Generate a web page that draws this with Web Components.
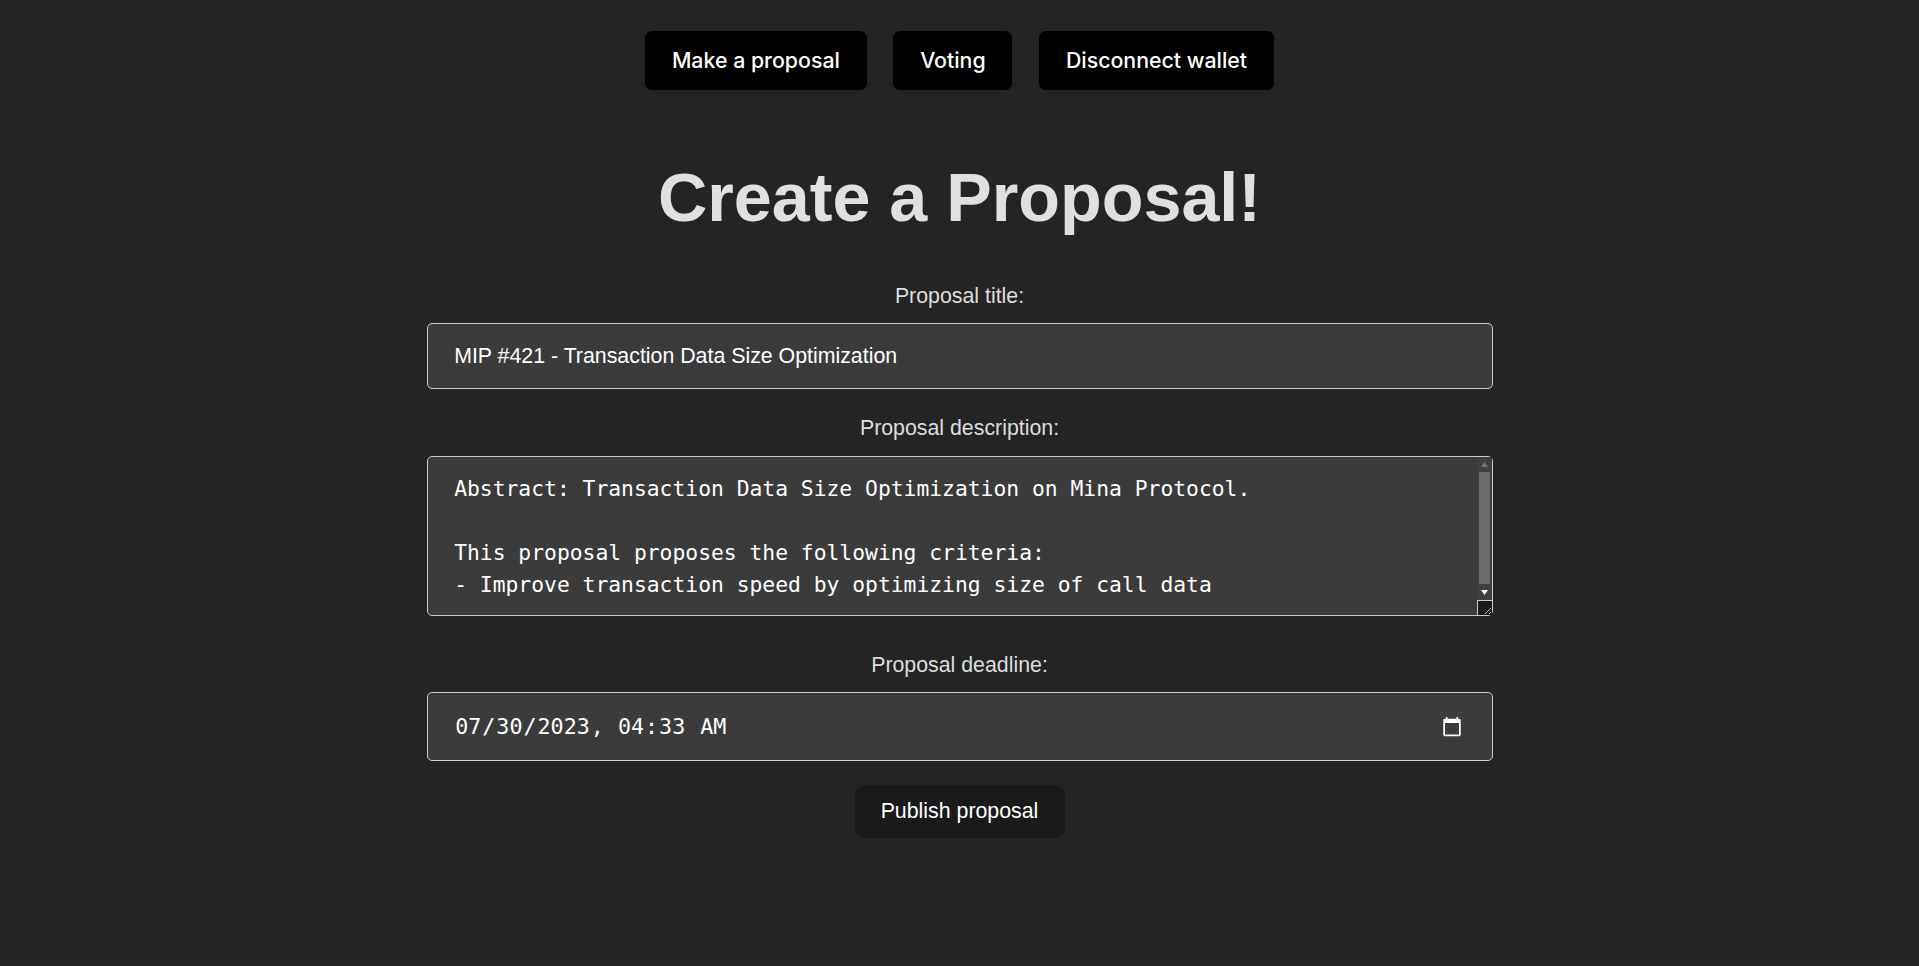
<!DOCTYPE html>
<html lang="en">
<head>
<meta charset="utf-8">
<title>Create a Proposal</title>
<style>
    html, body{ margin: 0; background: #242424; height: 100%; }
    body{ font-family: "Liberation Sans", sans-serif; color: #e0e0e0; }
</style>
</head>
<body>
<app-shell>
    <top-nav>
        <nav-button>Make a proposal</nav-button>
        <nav-button>Voting</nav-button>
        <nav-button>Disconnect wallet</nav-button>
    </top-nav>
    <proposal-form></proposal-form>
</app-shell>
<script>
class AppShell extends HTMLElement{
    constructor(){
        super();
        this.attachShadow({mode: "open"});
        this.shadowRoot.innerHTML = `
        <style>
            :host{
                display: flex;
                flex-direction: column;
                align-items: center;
                padding-top: 31px;
            }
        </style>
        <slot></slot>
        `;
    }
}

class TopNav extends HTMLElement{
    constructor(){
        super();
        this.attachShadow({mode: "open"});
        this.shadowRoot.innerHTML = `
        <style>
            :host{
                display: flex;
                justify-content: center;
                gap: 26.67px;
            }
        </style>
        <slot></slot>
        `;
    }
}

class NavButton extends HTMLElement{
    constructor(){
        super();
        this.attachShadow({mode: "open"});
        this.shadowRoot.innerHTML = `
        <style>
            :host{ display: block; }
            button{
                display: block;
                box-sizing: border-box;
                height: 59px;
                padding: 0 26.8px 2px;
                border: 0;
                border-radius: 7px;
                background: #000;
                color: #fff;
                font: 500 21.33px Inter, sans-serif;
                cursor: pointer;
            }
        </style>
        <button><slot></slot></button>
        `;
    }
}

// the browser hides native scrollbars in the photo, so this one is drawn over the textarea
class TextareaScrollbar extends HTMLElement{
    constructor(){
        super();
        this.attachShadow({mode: "open"});
        this.shadowRoot.innerHTML = `
        <style>
            :host{
                position: absolute;
                top: 1px;
                right: 1px;
                bottom: 1px;
                width: 15px;
                display: flex;
                flex-direction: column;
                background: #404040;
            }
            .arrow{
                flex: 0 0 15px;
                display: flex;
                align-items: center;
                justify-content: center;
            }
            .track{
                flex: 1;
                padding: 0 2px;
            }
            .thumb{
                height: 112px;
                background: #6b6b6b;
            }
            .corner{
                flex: 0 0 15px;
                box-sizing: border-box;
                display: block;
                background: #1a1a1a;
                border-top: 1px solid #ccc;
                border-left: 1px solid #ccc;
            }
            svg{ display: block; }
        </style>
        <div class="arrow"><svg width="7" height="5" viewBox="0 0 7 5"><path d="M3.5 0L7 5H0z" fill="#757575"/></svg></div>
        <div class="track"><div class="thumb"></div></div>
        <div class="arrow"><svg width="7" height="5" viewBox="0 0 7 5"><path d="M0 0H7L3.500 5z" fill="#fff"/></svg></div>
        <div class="corner"><svg width="14" height="14" viewBox="0 0 14 14"><path d="M7 13L13 7M11 13L13 11" stroke="#bbb" fill="none"/></svg></div>
        `;
    }
}

class ProposalForm extends HTMLElement{
    constructor(){
        super();
        this.attachShadow({mode: "open"});
        this.shadowRoot.innerHTML = `
        <style>
            :host{
                display: block;
                box-sizing: border-box;
                width: 1120px;
                height: 785px;
                padding: 68px 27px 0;
                border-radius: 10px;
                box-shadow: 0 0 10px rgba(0, 0, 0, .08);
                text-align: center;
            }
            h1{
                margin: 0 0 46px;
                font-size: 68.26px;
                line-height: 78px;
                font-weight: 700;
                color: #e0e0e0;
            }
            label{
                display: block;
                margin-bottom: 13px;
                font-size: 21.33px;
                line-height: 28px;
                color: #ddd;
            }
            label[for="description"]{
                margin-bottom: 14px;
            }
            input, textarea{
                display: block;
                box-sizing: border-box;
                width: 100%;
                margin: 0;
                padding: 15px 26.67px;
                border: 1px solid #ccc;
                border-radius: 5px;
                outline: 0;
                background: #3b3b3b;
                color: #fff;
                font-size: 21.33px;
                color-scheme: dark;
            }
            #title{
                height: 66px;
                margin-bottom: 25px;
                font-family: "Liberation Sans", sans-serif;
            }
            .area{
                position: relative;
                height: 160px;
                margin-bottom: 35px;
            }
            textarea{
                height: 100%;
                padding-top: 16px;
                line-height: 32px;
                resize: none;
                overflow: hidden;
                font-family: "DejaVu Sans Mono", monospace;
            }
            #deadline{
                height: 69px;
                margin-bottom: 24px;
                font-size: 21.7px;
                font-family: "DejaVu Sans Mono", monospace;
            }
            button{
                width: 210px;
                height: 53px;
                border: 0;
                border-radius: 10px;
                background: #1a1a1a;
                color: #fff;
                font: 400 21.33px "Liberation Sans", sans-serif;
                cursor: pointer;
            }
        </style>
        <h1>Create a Proposal!</h1>
        <label for="title">Proposal title:</label>
        <input id="title" type="text" value="MIP #421 - Transaction Data Size Optimization">
        <label for="description">Proposal description:</label>
        <div class="area">
            <textarea id="description">Abstract: Transaction Data Size Optimization on Mina Protocol.

This proposal proposes the following criteria:
- Improve transaction speed by optimizing size of call data
</textarea>
            <textarea-scrollbar></textarea-scrollbar>
        </div>
        <label for="deadline">Proposal deadline:</label>
        <input id="deadline" type="datetime-local" value="2023-07-30T04:33">
        <button type="button">Publish proposal</button>
        `;
    }
}

customElements.define("app-shell", AppShell);
customElements.define("top-nav", TopNav);
customElements.define("nav-button", NavButton);
customElements.define("textarea-scrollbar", TextareaScrollbar);
customElements.define("proposal-form", ProposalForm);
</script>
</body>
</html>
